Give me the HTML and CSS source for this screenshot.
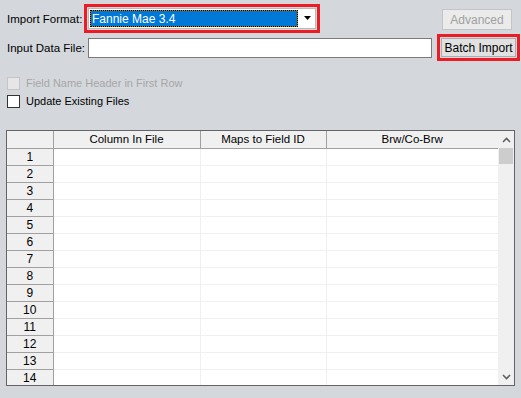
FILE: index.html
```html
<!DOCTYPE html>
<html lang="en">
<head>
    <meta charset="UTF-8">
    <title>Batch Import</title>
    <link rel="stylesheet" href="styles.css">
</head>
<body>
    <div class="window">
        <div class="row row-format">
            <label class="label">Import Format:</label>
            <div class="highlight combo-wrap">
                <div class="combo">
                    <div class="combo-value"><span class="combo-text">Fannie Mae 3.4</span></div>
                    <div class="combo-arrow">
                        <svg width="9" height="5" viewBox="0 0 9 5"><path d="M1 0h7L4.5 4z" fill="#000"/></svg>
                    </div>
                </div>
            </div>
            <button class="button button-advanced" disabled>Advanced</button>
        </div>

        <div class="row row-file">
            <label class="label">Input Data File:</label>
            <input class="textbox" type="text">
            <div class="highlight button-wrap">
                <button class="button">Batch Import</button>
            </div>
        </div>

        <div class="check disabled"><span class="box"></span>Field Name Header in First Row</div>
        <div class="check"><span class="box"></span>Update Existing Files</div>

        <div class="grid">
            <div class="grid-body">
                <table class="table">
                    <thead>
                        <tr>
                            <th class="rowhead"></th>
                            <th class="col1">Column In File</th>
                            <th class="col2">Maps to Field ID</th>
                            <th class="col3">Brw/Co-Brw</th>
                        </tr>
                    </thead>
                    <tbody>
                        <tr><td class="rowhead">1</td><td></td><td></td><td></td></tr>
                        <tr><td class="rowhead">2</td><td></td><td></td><td></td></tr>
                        <tr><td class="rowhead">3</td><td></td><td></td><td></td></tr>
                        <tr><td class="rowhead">4</td><td></td><td></td><td></td></tr>
                        <tr><td class="rowhead">5</td><td></td><td></td><td></td></tr>
                        <tr><td class="rowhead">6</td><td></td><td></td><td></td></tr>
                        <tr><td class="rowhead">7</td><td></td><td></td><td></td></tr>
                        <tr><td class="rowhead">8</td><td></td><td></td><td></td></tr>
                        <tr><td class="rowhead">9</td><td></td><td></td><td></td></tr>
                        <tr><td class="rowhead">10</td><td></td><td></td><td></td></tr>
                        <tr><td class="rowhead">11</td><td></td><td></td><td></td></tr>
                        <tr><td class="rowhead">12</td><td></td><td></td><td></td></tr>
                        <tr><td class="rowhead">13</td><td></td><td></td><td></td></tr>
                        <tr><td class="rowhead">14</td><td></td><td></td><td></td></tr>
                    </tbody>
                </table>
            </div>
            <div class="scrollbar">
                <div class="scroll-btn">
                    <svg width="9" height="6" viewBox="0 0 9 6"><path d="M1 5L4.5 1.5 8 5" fill="none" stroke="#606060" stroke-width="1.6"/></svg>
                </div>
                <div class="scroll-thumb"></div>
                <div class="scroll-track"></div>
                <div class="scroll-btn">
                    <svg width="9" height="6" viewBox="0 0 9 6"><path d="M1 1l3.5 3.5L8 1" fill="none" stroke="#606060" stroke-width="1.6"/></svg>
                </div>
            </div>
        </div>
    </div>
</body>
</html>
```

FILE: styles.css
```css
body {
    margin: 0;
    padding: 0;
    background-color: #d4d8dc;
    font-family: "Liberation Sans", Arial, sans-serif;
    font-size: 11.5px;
    color: #000;
}
.window {
    width: 521px;
    height: 398px;
    padding: 4px 0 0 6px;
    box-sizing: border-box;
}
.row {
    display: flex;
    align-items: center;
}
.label {
    width: 77px;
    flex-shrink: 0;
    padding-left: 1px;
    white-space: nowrap;
}
.highlight {
    border: 3px solid #ec1c24;
    padding: 1px;
    flex-shrink: 0;
}
.combo-wrap {
    width: 228px;
}
.combo {
    display: flex;
    height: 21px;
    border: 1px solid #b9b9b9;
    background-color: #fff;
    box-sizing: border-box;
}
.combo-value {
    flex: 1;
    padding: 1px;
}
.combo-text {
    display: flex;
    align-items: center;
    height: 100%;
    padding-left: 1px;
    background-color: #0078d7;
    color: #fff;
    font-size: 12px;
    outline: 1px dotted #000;
    outline-offset: -1px;
    box-sizing: border-box;
    border: 1px solid #c87800;
}
.combo-arrow {
    width: 16px;
    display: flex;
    align-items: center;
    justify-content: center;
    background-color: #fff;
}
.button {
    font-family: "Liberation Sans", Arial, sans-serif;
    font-size: 11px;
    height: 21px;
    padding: 0;
    background-color: #e1e1e1;
    border: 1px solid #adadad;
    color: #000;
    white-space: nowrap;
}
.button-advanced {
    width: 70px;
    flex-shrink: 0;
    margin-left: 122px;
    margin-top: 2px;
    color: #a0a0a0;
    background-color: #ebebeb;
    border-color: #c4c4c4;
    font-size: 12px;
}
.row-file {
    margin-top: 1px;
}
.textbox {
    width: 344px;
    flex-shrink: 0;
    height: 20px;
    margin: 0 5px 0 4px;
    border: 1px solid #7a7a7a;
    box-sizing: border-box;
    background-color: #fff;
}
.button-wrap .button {
    width: 75px;
    height: 19px;
    font-size: 12px;
}
.check {
    display: flex;
    align-items: center;
    height: 18px;
    padding-left: 1px;
    font-size: 11px;
}
.row-file + .check {
    margin-top: 13px;
}
.check .box {
    width: 11px;
    height: 11px;
    border: 1px solid #333;
    background-color: #fff;
    margin-right: 6px;
}
.check.disabled {
    color: #a6a6a6;
}
.check.disabled .box {
    border-color: #c4c4c4;
    background-color: #e6e6e6;
}
.grid {
    display: flex;
    width: 509px;
    height: 256px;
    margin-top: 20px;
    border: 1px solid #646464;
    box-sizing: border-box;
    background-color: #fff;
}
.grid-body {
    width: 491px;
    overflow: hidden;
}
.table {
    border-collapse: collapse;
    table-layout: fixed;
    width: 491px;
}
.table th, .table td {
    height: 17px;
    padding: 0;
    box-sizing: border-box;
    border-right: 1px solid #f0f0f0;
    border-bottom: 1px solid #f0f0f0;
    font-weight: normal;
    text-align: center;
    font-size: 11.5px;
}
.table th {
    background-color: #f0f0f0;
    border-right: 1px solid #a0a0a0;
    border-bottom: 1px solid #a0a0a0;
}
.table th.col3 {
    border-right: none;
}
.table .rowhead {
    width: 46px;
    background-color: #f0f0f0;
    border-right: 1px solid #a0a0a0;
    border-bottom: 1px solid #a0a0a0;
    font-size: 12px;
}
.col1 {
    width: 147px;
}
.col2 {
    width: 126px;
}
.col3 {
    width: 172px;
}
.table td:last-child {
    border-right: none;
}
.scrollbar {
    width: 16px;
    display: flex;
    flex-direction: column;
    background-color: #f0f0f0;
}
.scroll-btn {
    height: 17px;
    display: flex;
    align-items: center;
    justify-content: center;
}
.scroll-thumb {
    height: 16px;
    margin: 0 1px;
    background-color: #cdcdcd;
}
.scroll-track {
    flex: 1;
}
```
